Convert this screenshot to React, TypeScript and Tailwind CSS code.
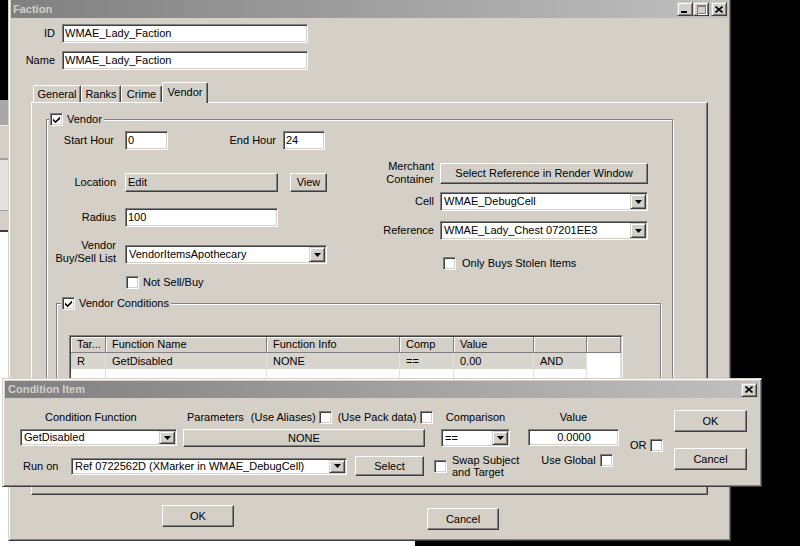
import type { ReactNode } from "react";

const raised =
  "border border-t-white border-l-white border-r-[#404040] border-b-[#404040] shadow-[inset_-1px_-1px_0_#808080]";
const sunken =
  "border border-t-[#808080] border-l-[#808080] border-r-white border-b-white shadow-[inset_1px_1px_0_#404040,inset_-1px_-1px_0_#d4d0c8] p-px";
const arrowBox =
  "border border-t-[#d4d0c8] border-l-[#d4d0c8] border-r-[#404040] border-b-[#404040] shadow-[inset_1px_1px_0_#fff,inset_-1px_-1px_0_#808080]";
const etched = "border border-[#808080] shadow-[1px_1px_0_#fff,inset_1px_1px_0_#fff]";
const frame =
  "border border-t-[#d4d0c8] border-l-[#d4d0c8] border-r-[#404040] border-b-[#404040] shadow-[inset_1px_1px_0_#fff,inset_-1px_-1px_0_#808080]";

function Button({ className = "", left, children }: { className?: string; left?: boolean; children: ReactNode }) {
  return (
    <div
      className={`flex shrink-0 items-center whitespace-nowrap bg-[#d4d0c8] ${left ? "justify-start pl-[2px]" : "justify-center"} ${raised} ${className}`}
    >
      {children}
    </div>
  );
}

function TextBox({ className = "", value, center }: { className?: string; value: string; center?: boolean }) {
  return (
    <div
      className={`flex shrink-0 items-center overflow-hidden whitespace-nowrap bg-white pl-[2px] ${center ? "justify-center" : ""} ${sunken} ${className}`}
    >
      {value}
    </div>
  );
}

function Select({ className = "", value }: { className?: string; value: string }) {
  return (
    <div className={`flex shrink-0 items-stretch bg-white ${sunken} ${className}`}>
      <div className="flex flex-1 items-center overflow-hidden whitespace-nowrap pl-[2px]">{value}</div>
      <div className={`flex w-[16px] items-center justify-center bg-[#d4d0c8] ${arrowBox}`}>
        <svg width="7" height="4" viewBox="0 0 7 4">
          <path d="M0 0h7L3.5 4z" fill="#000" />
        </svg>
      </div>
    </div>
  );
}

function Check({ checked, className = "" }: { checked?: boolean; className?: string }) {
  return (
    <div className={`flex h-[13px] w-[13px] shrink-0 items-center justify-center bg-white ${sunken} ${className}`}>
      {checked && (
        <svg width="7" height="7" viewBox="0 0 7 7">
          <path d="M0 2.5L2.5 5L7 0.5V3L2.5 7.2L0 4.7Z" fill="#000" />
        </svg>
      )}
    </div>
  );
}

function CaptionButton({ children, className = "" }: { children: ReactNode; className?: string }) {
  return (
    <div className={`flex h-[14px] w-[16px] items-center justify-center bg-[#d4d0c8] ${arrowBox} ${className}`}>
      {children}
    </div>
  );
}

function CloseGlyph() {
  return (
    <svg width="8" height="7" viewBox="0 0 8 7">
      <path d="M0.5 0.5L7.5 6.5M7.5 0.5L0.5 6.5" stroke="#000" strokeWidth="1.6" />
    </svg>
  );
}

function TitleBar({ title, children }: { title: string; children: ReactNode }) {
  return (
    <div className="flex h-[18px] shrink-0 items-center justify-between bg-linear-to-r from-[#808080] to-[#c0c0c0] pl-[2px] pr-[1px]">
      <span className="font-bold text-[#d4d0c8]">{title}</span>
      <div className="flex items-center">{children}</div>
    </div>
  );
}

const cols = [
  { w: "w-[35px]", h: "Tar...", r: "R" },
  { w: "w-[161px]", h: "Function Name", r: "GetDisabled" },
  { w: "w-[133px]", h: "Function Info", r: "NONE" },
  { w: "w-[54px]", h: "Comp", r: "==" },
  { w: "w-[80px]", h: "Value", r: "0.00" },
  { w: "w-[53px]", h: "", r: "AND" },
  { w: "w-[34px]", h: "", r: "" },
];

function ConditionsTable() {
  return (
    <div className="ml-[12px] mt-[25px] w-[554px] border border-t-[#808080] border-l-[#808080] border-r-white border-b-white">
      <div className="border border-t-[#404040] border-l-[#404040] border-r-[#d4d0c8] border-b-[#d4d0c8] bg-white">
        <div className="flex h-[16px]">
          {cols.map((c, i) => (
            <div
              key={i}
              className={`${c.w} flex items-center border-r border-b border-r-[#808080] border-b-[#808080] bg-[#d4d0c8] pl-[6px] shadow-[inset_1px_1px_0_#fff]`}
            >
              {c.h}
            </div>
          ))}
        </div>
        <div className="flex h-[16px]">
          {cols.map((c, i) => (
            <div
              key={i}
              className={`${c.w} flex items-center border-r border-r-[#e4e2dc] pl-[6px] ${i < 6 ? "bg-[#d8d5ce]" : "bg-white"}`}
            >
              {c.r}
            </div>
          ))}
        </div>
        <div className="flex h-[40px]">
          {cols.map((c, i) => (
            <div key={i} className={`${c.w} border-r border-r-[#e4e2dc]`} />
          ))}
        </div>
      </div>
    </div>
  );
}

function FactionWindow() {
  return (
    <div className={`absolute left-[8px] top-[-3px] flex h-[544px] w-[723px] flex-col bg-[#d4d0c8] p-[2px] ${frame}`}>
      <TitleBar title="Faction">
        <CaptionButton>
          <div className="mt-[6px] mr-[2px] h-[2px] w-[6px] bg-black" />
        </CaptionButton>
        <CaptionButton>
          <div className="h-[9px] w-[9px] border border-t-2 border-[#808080] shadow-[1px_1px_0_#fff]" />
        </CaptionButton>
        <CaptionButton className="ml-[2px]">
          <CloseGlyph />
        </CaptionButton>
      </TitleBar>

      {/* ID / Name */}
      <div className="mt-[6px] flex items-center">
        <span className="w-[44px] text-right">ID</span>
        <TextBox className="ml-[7px] h-[19px] w-[246px]" value="WMAE_Lady_Faction" />
      </div>
      <div className="mt-[8px] flex items-center">
        <span className="w-[44px] text-right">Name</span>
        <TextBox className="ml-[7px] h-[19px] w-[246px]" value="WMAE_Lady_Faction" />
      </div>

      {/* Tabs */}
      <div className="ml-[20px] mt-[12px] flex w-[677px] flex-col">
        <div className="relative z-10 -mb-px flex h-[21px] items-end pl-[2px]">
          {[
            ["General", "w-[48px]"],
            ["Ranks", "w-[40px]"],
            ["Crime", "w-[41px]"],
          ].map(([t, w]) => (
            <div
              key={t}
              className={`${w} mb-px flex h-[17px] items-center justify-center rounded-t-[2px] border-t border-l border-r border-t-white border-l-white border-r-[#404040] shadow-[inset_-1px_0_0_#808080]`}
            >
              {t}
            </div>
          ))}
          <div className="flex h-[21px] w-[46px] items-start justify-center rounded-t-[2px] border-t border-l border-r border-t-white border-l-white border-r-[#404040] bg-[#d4d0c8] pt-[3px] shadow-[inset_-1px_0_0_#808080]">
            Vendor
          </div>
        </div>
        <div
          className={`h-[393px] border border-t-white border-l-white border-r-[#404040] border-b-[#404040] pl-[14px] pt-[16px] shadow-[inset_-1px_-1px_0_#808080]`}
        >
          {/* Vendor group */}
          <div className={`h-[366px] w-[627px] ${etched}`}>
            <div className="-mt-[7px] ml-[2px] flex h-[13px] w-max items-center gap-[4px] bg-[#d4d0c8] pl-[1px] pr-[2px]">
              <Check checked />
              <span>Vendor</span>
            </div>

            <div className="mt-[5px] flex">
              {/* left column */}
              <div className="flex w-[333px] flex-col">
                <div className="flex h-[19px] items-center">
                  <span className="w-[69px] pr-[2px] text-right">Start Hour</span>
                  <TextBox className="ml-[9px] h-[19px] w-[43px]" value="0" />
                  <span className="w-[108px] text-right">End Hour</span>
                  <TextBox className="ml-[7px] h-[19px] w-[42px]" value="24" />
                </div>
                <div className="mt-[23px] flex h-[19px] items-center">
                  <span className="w-[69px] text-right">Location</span>
                  <Button left className="ml-[9px] h-[19px] w-[153px]">
                    Edit
                  </Button>
                  <Button className="ml-[12px] h-[19px] w-[37px]">View</Button>
                </div>
                <div className="mt-[16px] flex h-[19px] items-center">
                  <span className="w-[69px] text-right">Radius</span>
                  <TextBox className="ml-[9px] h-[19px] w-[153px]" value="100" />
                </div>
                <div className="mt-[12px] flex items-end">
                  <span className="-mb-px w-[69px] text-right">
                    Vendor
                    <br />
                    Buy/Sell List
                  </span>
                  <Select className="ml-[9px] h-[19px] w-[202px]" value="VendorItemsApothecary" />
                </div>
                <div className="mt-[12px] flex items-center">
                  <Check className="ml-[79px]" />
                  <span className="ml-[4px]">Not Sell/Buy</span>
                </div>
              </div>

              {/* right column */}
              <div className="mt-[29px] flex flex-col">
                <div className="flex items-center">
                  <span className="w-[54px] text-right">
                    Merchant
                    <br />
                    Container
                  </span>
                  <Button className="ml-[6px] h-[21px] w-[208px]">Select Reference in Render Window</Button>
                </div>
                <div className="mt-[6px] flex items-center">
                  <span className="w-[54px] text-right">Cell</span>
                  <Select className="ml-[6px] h-[19px] w-[208px]" value="WMAE_DebugCell" />
                </div>
                <div className="mt-[10px] flex items-center">
                  <span className="w-[54px] text-right">Reference</span>
                  <Select className="ml-[6px] h-[19px] w-[208px]" value="WMAE_Lady_Chest 07201EE3" />
                </div>
                <div className="mt-[17px] flex items-center">
                  <Check className="ml-[63px]" />
                  <span className="ml-[6px]">Only Buys Stolen Items</span>
                </div>
              </div>
            </div>

            {/* Vendor Conditions group */}
            <div className={`ml-[9px] mt-[14px] h-[175px] w-[605px] ${etched}`}>
              <div className="-mt-[7px] ml-[4px] flex h-[13px] w-max items-center gap-[4px] bg-[#d4d0c8] pl-[1px] pr-[2px]">
                <Check checked />
                <span>Vendor Conditions</span>
              </div>
              <ConditionsTable />
            </div>
          </div>
        </div>
      </div>

      {/* OK / Cancel */}
      <div className="mt-[10px] flex items-start">
        <Button className="ml-[151px] h-[22px] w-[72px]">OK</Button>
        <Button className="ml-[193px] mt-[3px] h-[22px] w-[72px]">Cancel</Button>
      </div>
    </div>
  );
}

function ConditionItem() {
  return (
    <div className={`absolute left-[2px] top-[378px] flex h-[109px] w-[760px] flex-col bg-[#d4d0c8] p-[2px] ${frame}`}>
      <div className="flex h-[17px] shrink-0 items-center justify-between bg-linear-to-r from-[#808080] to-[#c0c0c0] pl-[3px] pr-[2px]">
        <span className="font-bold text-[#d4d0c8]">Condition Item</span>
        <CaptionButton>
          <CloseGlyph />
        </CaptionButton>
      </div>

      <div className="flex">
        <div className="flex w-[669px] shrink-0 flex-col pt-[11px]">
          {/* top row */}
          <div className="flex h-[38px] items-start">
            <div className="ml-[15px] flex w-[157px] flex-col">
              <span className="h-[16px] pl-[25px] leading-[16px]">Condition Function</span>
              <Select className="mt-[4px] h-[17px] w-[157px]" value="GetDisabled" />
            </div>
            <div className="ml-[6px] flex w-[242px] flex-col">
              <div className="flex h-[16px] items-center whitespace-nowrap pl-[4px]">
                <span>Parameters</span>
                <span className="ml-[7px]">(Use Aliases)</span>
                <Check className="ml-[3px] h-[12px] w-[12px]" />
                <span className="ml-[6px]">(Use Pack data)</span>
                <Check className="ml-[3px] h-[12px] w-[12px]" />
              </div>
              <Button className="mt-[4px] h-[18px] w-[242px]">NONE</Button>
            </div>
            <div className="ml-[16px] flex w-[69px] flex-col">
              <span className="h-[16px] text-center leading-[16px]">Comparison</span>
              <Select className="mt-[4px] h-[18px] w-[69px]" value="==" />
            </div>
            <div className="ml-[18px] flex w-[91px] flex-col">
              <span className="h-[16px] text-center leading-[16px]">Value</span>
              <TextBox center className="mt-[4px] h-[17px] w-[91px] pl-0" value="0.0000" />
            </div>
            <div className="ml-[11px] mt-[29px] flex items-center gap-[3px]">
              <span className="mt-[1px]">OR</span>
              <Check className="h-[12px] w-[12px]" />
            </div>
          </div>

          {/* bottom row */}
          <div className="mt-[7px] flex h-[24px] items-center">
            <span className="ml-[18px] w-[48px]">Run on</span>
            <Select className="h-[17px] w-[276px]" value="Ref 0722562D (XMarker in WMAE_DebugCell)" />
            <Button className="ml-[8px] h-[20px] w-[69px]">Select</Button>
            <Check className="ml-[10px] h-[12px] w-[12px]" />
            <span className="ml-[5px] whitespace-nowrap leading-[12px]">
              Swap Subject
              <br />
              and Target
            </span>
            <div className="ml-[22px] flex h-[13px] items-center self-start">
              <span>Use Global</span>
              <Check className="ml-[4px] h-[12px] w-[12px]" />
            </div>
          </div>
        </div>

        <div className="flex flex-col pt-[12px]">
          <Button className="h-[22px] w-[73px]">OK</Button>
          <Button className="mt-[16px] h-[22px] w-[73px]">Cancel</Button>
        </div>
      </div>
    </div>
  );
}

export default function App() {
  return (
    <div className="relative h-[546px] w-[800px] overflow-hidden bg-black font-['Liberation_Sans',Arial,sans-serif] text-[11px] leading-[13px] text-black">
      {/* window behind, on the left */}
      <div className="absolute left-[-200px] top-[100px] flex h-[446px] w-[615px] flex-col bg-white">
        <div className="h-[25px] bg-[#a8a8a8]" />
        <div className="h-[33px] border-t border-[#eeeeee] bg-[#d4d0c8]" />
        <div className="h-[52px] border-t-2 border-[#a0a0a0] bg-[#e4e2dc]" />
        <div className="h-[20px] border-t border-[#a0a0a0] bg-[#d4d0c8]" />
        <div className="border-t-2 border-[#404040]" />
      </div>
      <FactionWindow />
      <ConditionItem />
    </div>
  );
}
